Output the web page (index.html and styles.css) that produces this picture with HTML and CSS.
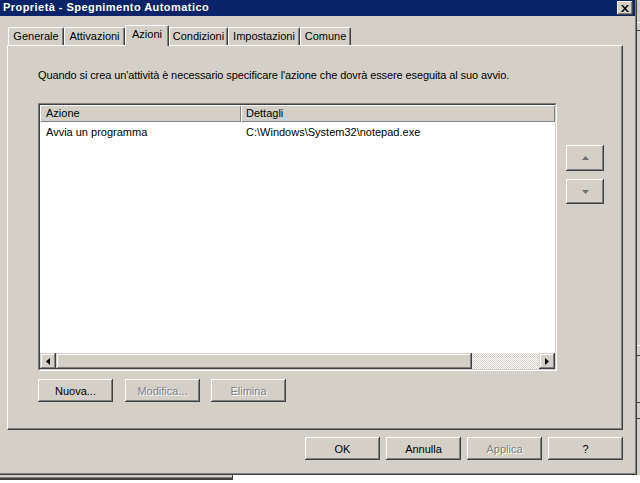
FILE: index.html
```html
<!DOCTYPE html>
<html lang="it">
<head>
  <meta charset="UTF-8">
  <title>Proprietà - Spegnimento Automatico</title>
  <link rel="stylesheet" href="styles.css">
</head>
<body>
  <div class="screen">
    <div class="top-row">
      <div class="dialog">
        <div class="titlebar">
          <span class="title">Proprietà - Spegnimento Automatico</span>
          <button class="close-btn">
            <svg width="8" height="7" viewBox="0 0 8 7"><path d="M0 0H2L4 2.4L6 0H8L5 3.5L8 7H6L4 4.6L2 7H0L3 3.5Z" fill="#000"/></svg>
          </button>
        </div>

        <div class="tabs">
          <div class="tab" style="width: 56px">Generale</div>
          <div class="tab" style="width: 61px">Attivazioni</div>
          <div class="tab tab-active" style="width: 44px">Azioni</div>
          <div class="tab" style="width: 59px">Condizioni</div>
          <div class="tab" style="width: 72px">Impostazioni</div>
          <div class="tab" style="width: 51px">Comune</div>
        </div>

        <div class="panel">
          <p class="intro">Quando si crea un'attività è necessario specificare l'azione che dovrà essere eseguita al suo avvio.</p>

          <div class="list-area">
            <div class="listview">
              <div class="listview-inner">
                <div class="list-header">
                  <div class="col col-azione">Azione</div>
                  <div class="col col-dettagli">Dettagli</div>
                </div>
                <div class="list-body">
                  <div class="row">
                    <div class="cell cell-azione">Avvia un programma</div>
                    <div class="cell cell-dettagli">C:\Windows\System32\notepad.exe</div>
                  </div>
                </div>
                <div class="hscroll">
                  <div class="sb-btn">
                    <svg width="4" height="7" viewBox="0 0 4 7"><path d="M4 0V7L0 3.5Z" fill="#000"/></svg>
                  </div>
                  <div class="sb-thumb"></div>
                  <div class="sb-track"></div>
                  <div class="sb-btn">
                    <svg width="4" height="7" viewBox="0 0 4 7"><path d="M0 0V7L4 3.5Z" fill="#000"/></svg>
                  </div>
                </div>
              </div>
            </div>

            <div class="order-btns">
              <button class="btn btn-up">
                <svg width="7" height="4" viewBox="0 0 7 4"><path d="M0 4H7L3.5 0Z" fill="#6f6f6f"/></svg>
              </button>
              <button class="btn btn-down">
                <svg width="7" height="4" viewBox="0 0 7 4"><path d="M0 0H7L3.5 4Z" fill="#6f6f6f"/></svg>
              </button>
            </div>
          </div>

          <div class="action-btns">
            <button class="btn">Nuova...</button>
            <button class="btn" disabled>Modifica...</button>
            <button class="btn btn-elimina" disabled>Elimina</button>
          </div>
        </div>

        <div class="footer">
          <button class="btn">OK</button>
          <button class="btn">Annulla</button>
          <button class="btn" disabled>Applica</button>
          <button class="btn">?</button>
        </div>
      </div>
      <div class="behind-right"></div>
    </div>
    <div class="behind-bottom">
      <div class="behind-window"></div>
    </div>
  </div>
</body>
</html>
```

FILE: styles.css
```css
/* Finestra proprieta' in stile classico */
body {
  margin: 0;
  background: #fff;
  font-family: "Liberation Sans", Arial, sans-serif;
  font-size: 11px;
  color: #000;
}

.screen {
  width: 640px;
  height: 483px;
  overflow: hidden;
}

.top-row {
  display: flex;
}

.dialog {
  width: 637px;
  height: 475px;
  flex-shrink: 0;
  box-sizing: border-box;
  background: #d4d0c8;
  box-shadow: inset -1px -1px 0 #404040, inset -2px -2px 0 #808080;
  display: flex;
  flex-direction: column;
}

.titlebar {
  width: 635px;
  height: 16px;
  box-sizing: border-box;
  padding: 0 2px 0 3px;
  background: #0a246a;
  display: flex;
  align-items: flex-start;
  justify-content: space-between;
}

.title {
  color: #fff;
  font-weight: bold;
  font-size: 11px;
  letter-spacing: 0.45px;
  line-height: 15px;
}

.close-btn {
  width: 16px;
  height: 14px;
  margin-top: 1px;
  padding: 0;
  border: none;
  background: #d4d0c8;
  box-shadow: inset -1px -1px 0 #404040, inset 1px 1px 0 #fff, inset -2px -2px 0 #808080;
  display: flex;
  align-items: center;
  justify-content: center;
}

/* Schede */
.tabs {
  height: 20px;
  margin-top: 9px;
  padding-left: 8px;
  display: flex;
  align-items: flex-end;
}

.tab {
  height: 18px;
  box-sizing: border-box;
  border-top: 1px solid #fff;
  border-left: 1px solid #fff;
  border-right: 1px solid #404040;
  border-radius: 2px 2px 0 0;
  box-shadow: inset -1px 0 0 #808080;
  display: flex;
  align-items: center;
  justify-content: center;
  padding-bottom: 1px;
  white-space: nowrap;
}

.tab-active {
  height: 21px;
  margin-bottom: -1px;
  padding-bottom: 4px;
  position: relative;
  z-index: 1;
  background: #d4d0c8;
}

.panel {
  width: 616px;
  height: 385px;
  margin-left: 7px;
  box-sizing: border-box;
  border: 1px solid;
  border-color: #fff #404040 #404040 #fff;
  box-shadow: inset -1px -1px 0 #808080;
  padding: 23px 0 0 30px;
}

.intro {
  margin: 0;
  line-height: 13px;
  letter-spacing: -0.1px;
  white-space: nowrap;
}

.list-area {
  display: flex;
  margin-top: 21px;
}

.listview {
  width: 519px;
  height: 268px;
  box-sizing: border-box;
  border: 1px solid;
  border-color: #808080 #fff #fff #808080;
}

.listview-inner {
  height: 100%;
  box-sizing: border-box;
  border: 1px solid;
  border-color: #404040 #d4d0c8 #d4d0c8 #404040;
  background: #fff;
  display: flex;
  flex-direction: column;
}

.list-header {
  display: flex;
  height: 17px;
  flex-shrink: 0;
}

.col {
  height: 17px;
  box-sizing: border-box;
  background: #d4d0c8;
  box-shadow: inset 1px 1px 0 #fff, inset -1px -1px 0 #808080;
  line-height: 17px;
  padding-left: 6px;
}

.col-azione {
  width: 201px;
}

.col-dettagli {
  flex: 1;
  padding-left: 5px;
}

.list-body {
  flex: 1;
  padding-top: 2px;
}

.row {
  display: flex;
  height: 17px;
  line-height: 17px;
}

.cell-azione {
  width: 201px;
  padding-left: 6px;
  box-sizing: border-box;
}

.cell-dettagli {
  padding-left: 5px;
}

.hscroll {
  height: 16px;
  flex-shrink: 0;
  display: flex;
}

.sb-btn,
.sb-thumb {
  background: #d4d0c8;
  box-shadow: inset -1px -1px 0 #404040, inset 1px 1px 0 #d4d0c8, inset -2px -2px 0 #808080, inset 2px 2px 0 #fff;
}

.sb-btn {
  width: 16px;
  height: 16px;
  display: flex;
  align-items: center;
  justify-content: center;
}

.sb-thumb {
  width: 416px;
}

.sb-track {
  flex: 1;
  background: repeating-conic-gradient(#d4d0c8 0 25%, #fff 0 50%);
  background-size: 2px 2px;
}

/* Pulsanti */
.btn {
  width: 75px;
  height: 23px;
  padding: 0;
  border: none;
  background: #d4d0c8;
  box-shadow: inset -1px -1px 0 #404040, inset 1px 1px 0 #fff, inset -2px -2px 0 #808080;
  font-family: inherit;
  font-size: 11px;
  color: #000;
}

.btn:disabled {
  color: #808080;
  text-shadow: 1px 1px 0 #fff;
}

.order-btns {
  display: flex;
  flex-direction: column;
  gap: 8px;
  margin-left: 9px;
  padding-top: 42px;
}

.btn-up,
.btn-down {
  width: 38px;
  display: flex;
  align-items: center;
  justify-content: center;
}

.btn-up {
  height: 26px;
}

.btn-down {
  height: 25px;
}

.action-btns {
  display: flex;
  gap: 12px;
  margin-top: 8px;
}

.btn-elimina {
  margin-left: -1px;
}

.footer {
  display: flex;
  justify-content: flex-end;
  gap: 6px;
  margin-top: 7px;
  padding-right: 14px;
}

/* Finestre dietro */
.behind-right {
  flex: 1;
  height: 475px;
  background:
    linear-gradient(#d4d0c8 0 22px, #fff 22px 23px, #d4d0c8 23px 30px, #404040 30px 31px, #d4d0c8 31px 345px, #fff 345px 346px, #d4d0c8 346px 355px, #404040 355px 356px, #d4d0c8 356px 402px, #404040 402px 403px, #d4d0c8 403px 418px, #404040 418px 419px, #d4d0c8 419px);
}

.behind-bottom {
  height: 8px;
  background: #fff;
}

.behind-window {
  width: 233px;
  height: 5px;
  box-sizing: border-box;
  background: #d4d0c8;
  border-bottom: 2px solid #404040;
  border-right: 1px solid #404040;
  box-shadow: inset 0 -1px 0 #808080;
}
```
